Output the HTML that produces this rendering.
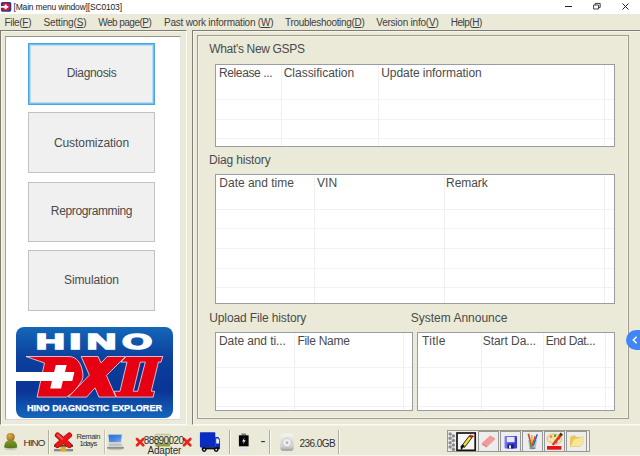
<!DOCTYPE html>
<html lang="en">
<head>
<meta charset="utf-8">
<title>[Main menu window][SC0103]</title>
<style>
*{margin:0;padding:0;box-sizing:border-box;}
html,body{width:640px;height:456px;overflow:hidden;background:#ebead9;}
body{position:relative;font-family:"Liberation Sans","IPAGothic",sans-serif;color:#2a2a2a;}
.abs{position:absolute;}
/* title bar */
#title{left:0;top:0;width:640px;height:14px;background:#fff;}
#title .t{left:14px;top:2px;font-size:8.5px;line-height:10px;color:#1a1a1a;white-space:nowrap;}
/* menu */
#menu{left:0;top:14px;width:640px;height:16px;background:#ebead9;}
#menu span{position:absolute;top:3px;font-size:10px;line-height:12px;white-space:nowrap;color:#404040;}
#menu u{text-decoration:underline;text-underline-offset:1px;}
/* panels */
.lbl{font-size:12px;line-height:14px;white-space:nowrap;color:#4a4a4a;}
.btn{left:28px;width:127px;height:61px;background:#f0f0f0;border:1px solid #c2c2c2;font-size:12px;text-align:center;color:#4a4a4a;}
.btn span{position:absolute;left:0;right:0;white-space:nowrap;line-height:14px;}
.list{background:#fff;border:1px solid #999ca1;overflow:hidden;}
.list .h{position:absolute;top:1px;font-size:12px;line-height:14px;white-space:nowrap;color:#4a4a4a;}
.list .v{position:absolute;top:0;bottom:0;width:1px;background:#f0f0f0;}
.list .r{position:absolute;left:0;right:0;height:1px;background:#f2f2f2;}
/* status */
.sep{width:2px;top:430px;height:24px;border-left:1px solid #b0ada1;border-right:1px solid #f8f7f0;}
.st{font-size:10px;line-height:11px;white-space:nowrap;color:#2e2e2e;}
/*FIT*/
#tt{letter-spacing:-0.177px;left:13.50px !important;}
#m1{letter-spacing:-0.318px;left:4.50px !important;}
#m2{letter-spacing:-0.165px;left:43.50px !important;}
#m3{letter-spacing:-0.527px;left:98.25px !important;}
#m4{letter-spacing:-0.232px;left:164.00px !important;}
#m5{letter-spacing:-0.324px;left:285.00px !important;}
#m6{letter-spacing:-0.222px;left:376.25px !important;}
#m7{letter-spacing:-0.497px;left:450.75px !important;}
#b1{letter-spacing:-0.332px;}
#b2{letter-spacing:-0.065px;}
#b3{letter-spacing:-0.366px;}
#b4{letter-spacing:-0.115px;}
#l1{letter-spacing:-0.338px;left:209.30px !important;}
#l2{letter-spacing:-0.142px;left:208.90px !important;}
#l3{letter-spacing:-0.132px;left:209.30px !important;}
#l4{letter-spacing:-0.006px;left:410.75px !important;}
#h1{letter-spacing:-0.388px;left:3.00px !important;}
#h2{letter-spacing:-0.016px;left:67.70px !important;}
#h3{letter-spacing:-0.052px;left:165.20px !important;}
#h4{letter-spacing:-0.014px;left:3.35px !important;}
#h5{letter-spacing:-0.008px;left:101.10px !important;}
#h6{letter-spacing:-0.083px;left:230.10px !important;}
#h7{letter-spacing:-0.096px;left:3.00px !important;}
#h8{letter-spacing:-0.273px;left:81.40px !important;}
#h9{letter-spacing:0.316px;left:4.00px !important;}
#h10{letter-spacing:-0.053px;left:64.70px !important;}
#h11{letter-spacing:-0.397px;left:127.70px !important;}
#s1{letter-spacing:-0.800px;left:23.40px !important;}
#s2{letter-spacing:-0.414px;left:76.40px !important;}
#s3{letter-spacing:-0.616px;left:79.40px !important;}
#s4{letter-spacing:-0.586px;left:143.70px !important;}
#s5{letter-spacing:-0.189px;left:147.50px !important;}
#s6{letter-spacing:-0.547px;left:299.50px !important;}
/*ENDFIT*/
</style>
</head>
<body>
<!-- TITLE BAR -->
<div id="title" class="abs">
  <svg class="abs" style="left:0;top:1px" width="13" height="12" viewBox="0 1 13 12">
    <rect x="0.900" y="1.900" width="10.400" height="9.800" rx="1.600" fill="#1b3b9c"/>
    <path d="M2.600 3.100H7.200C9.600 3.100 10.300 5 10.200 6.800C10.100 8.800 9.200 10.500 6.900 10.500H2.300Z" fill="#e01020"/>
    <path d="M0.900 6H4.600V4.500H6.700V6H8.300V7.700H6.700V9.200H4.600V7.700H0.900Z" fill="#fff"/>
  </svg>
  <div class="abs t" id="tt">[Main menu window][SC0103]</div>
  <svg class="abs" style="left:560px;top:0" width="80" height="14" viewBox="0 0 80 14">
    <path d="M5 6.5h7" stroke="#222" stroke-width="1" fill="none"/>
    <path d="M33.600 5h5v4h-5zM35.200 5v-1.600h5v4h-1.600" stroke="#2c2c2c" stroke-width="0.900" stroke-linejoin="round" fill="none"/>
    <path d="M62.5 3.5l6 6M68.5 3.5l-6 6" stroke="#222" stroke-width="1" fill="none"/>
  </svg>
</div>
<!-- MENU BAR -->
<div id="menu" class="abs">
  <span id="m1" style="left:5px">File(<u>F</u>)</span>
  <span id="m2" style="left:44px">Setting(<u>S</u>)</span>
  <span id="m3" style="left:99px">Web page(<u>P</u>)</span>
  <span id="m4" style="left:164px">Past work information (<u>W</u>)</span>
  <span id="m5" style="left:286px">Troubleshooting(<u>D</u>)</span>
  <span id="m6" style="left:376px">Version info(<u>V</u>)</span>
  <span id="m7" style="left:451px">Help(<u>H</u>)</span>
</div>

<!-- LEFT PANEL -->
<div class="abs" style="left:0;top:30px;width:187px;height:395px;border-left:1px solid #7f7d72;border-top:1px solid #7f7d72;border-right:1px solid #fbfaf3;border-bottom:1px solid #fbfaf3;box-shadow:inset 1px 1px 0 #f6f5ed;"></div>
<div class="abs" style="left:5px;top:36px;width:176px;height:384px;background:#fff;border:1px solid #d9d7d0;border-right-color:#e4e3e2;border-top-color:#98968b;border-left-color:#a9a79c;"></div>
<div class="abs btn" style="top:43px;height:62px;border:1px solid #52a3dd;box-shadow:inset 0 0 0 1px #72c0ef, inset 0 0 0 2px #b3e0f8;"><span id="b1" style="top:22px">Diagnosis</span></div>
<div class="abs btn" style="top:112px"><span id="b2" style="top:22.500px">Customization</span></div>
<div class="abs btn" style="top:182px;height:60px"><span id="b3" style="top:20.750px">Reprogramming</span></div>
<div class="abs btn" style="top:250px"><span id="b4" style="top:22.400px">Simulation</span></div>

<!-- LOGO -->
<svg class="abs" style="left:16px;top:327px" width="157" height="91" viewBox="16 327 157 91">
  <defs>
    <linearGradient id="lg" x1="0" y1="0" x2="0" y2="1">
      <stop offset="0" stop-color="#1467b8"/>
      <stop offset="0.35" stop-color="#0c3f9c"/>
      <stop offset="0.7" stop-color="#0a3596"/>
      <stop offset="1" stop-color="#1466bc"/>
    </linearGradient>
  </defs>
  <rect x="16" y="327" width="157" height="91" rx="8" fill="url(#lg)"/>
  <g font-family="Liberation Sans, sans-serif" font-weight="bold" font-size="21.200" fill="#fff" stroke="#fff" stroke-width="1.600" stroke-linejoin="miter">
    <text transform="translate(35.940,348.900) scale(1.878,1)">H</text>
    <text transform="translate(69.490,348.900) scale(1.957,1)">I</text>
    <text transform="translate(86.710,348.900) scale(1.927,1)">N</text>
    <text transform="translate(122.370,348.700) scale(1.806,1)">O</text>
  </g>
  <!-- D with wing -->
  <path d="M26 356.500H69.750C76.500 357 81.200 363 82.600 372C83.300 376 82.800 379 81.500 381.200C77.500 388 72.500 393.500 66.500 397.100H37.100L44.500 363Z" fill="#e60012" stroke="#fff" stroke-width="0.700"/>
  <!-- white bar + cross -->
  <path d="M15 372.100H54.100L55.800 364.900H66.700L65 372.100H74.400L72.300 381.100H62.850L61.100 388.400H50.200L51.900 381.100H15Z" fill="#fff"/>
  <!-- X -->
  <path d="M81.200 356.500H98.100L100.970 363L107.250 356.500H125.500L106.470 375.500L115.900 397.100H99L95 387.900L86.600 397.100H68.300L89.370 375.100Z" fill="#e60012" stroke="#fff" stroke-width="0.700"/>
  <!-- II -->
  <path d="M126.200 356.500H162.800L161 362.100H158.400L151.300 391.250H154.600L153.200 397.100H116.500L114 391.250H120L127 362.100H120.900Z" fill="#e60012" stroke="#fff" stroke-width="0.700"/>
  <path d="M140.300 362.100H145.300L137.700 391.250H133.300Z" fill="#0d2f8e" stroke="#fff" stroke-width="0.700"/>
  <text x="94.500" y="410.600" text-anchor="middle" font-family="Liberation Sans, sans-serif" font-weight="bold" font-size="8.600" fill="#fff" stroke="#fff" stroke-width="0.250" textLength="135.200" lengthAdjust="spacingAndGlyphs">HINO DIAGNOSTIC EXPLORER</text>
</svg>

<!-- RIGHT PANEL -->
<div class="abs" style="left:192px;top:30px;width:450px;height:395px;border-left:1px solid #7f7d72;border-top:1px solid #7f7d72;border-bottom:1px solid #fbfaf3;box-shadow:inset 1px 1px 0 #f6f5ed;"></div>
<div class="abs" style="left:197px;top:35px;width:432px;height:384px;border:1px solid #9f9d91;box-shadow:inset 0 0 0 1px #f3f2e8;"></div>
<div class="abs lbl" id="l1" style="left:209px;top:42px">What's New GSPS</div>
<div class="abs list" style="left:215px;top:64px;width:400px;height:83px">
  <span class="h" id="h1" style="left:4px">Release ...</span><span class="h" id="h2" style="left:68px">Classification</span><span class="h" id="h3" style="left:165px">Update information</span>
  <i class="v" style="left:65px"></i><i class="v" style="left:162px"></i><i class="v" style="left:388px"></i>
  <i class="r" style="top:34px"></i><i class="r" style="top:53.500px"></i><i class="r" style="top:73px"></i>
</div>
<div class="abs lbl" id="l2" style="left:209px;top:153px">Diag history</div>
<div class="abs list" style="left:215px;top:174px;width:400px;height:130px">
  <span class="h" id="h4" style="left:4px">Date and time</span><span class="h" id="h5" style="left:101px">VIN</span><span class="h" id="h6" style="left:231px">Remark</span>
  <i class="v" style="left:98px"></i><i class="v" style="left:228px"></i><i class="v" style="left:388px"></i>
  <i class="r" style="top:34px"></i><i class="r" style="top:53.300px"></i><i class="r" style="top:73.300px"></i><i class="r" style="top:92.600px"></i><i class="r" style="top:111.700px"></i>
</div>
<div class="abs lbl" id="l3" style="left:209px;top:311px">Upload File history</div>
<div class="abs list" style="left:215px;top:332px;width:198px;height:78.600px">
  <span class="h" id="h7" style="left:4px">Date and ti...</span><span class="h" id="h8" style="left:82px">File Name</span>
  <i class="v" style="left:78px"></i><i class="v" style="left:187px"></i>
  <i class="r" style="top:34.300px"></i><i class="r" style="top:53.700px"></i><i class="r" style="top:73.100px"></i>
</div>
<div class="abs lbl" id="l4" style="left:411px;top:311px">System Announce</div>
<div class="abs list" style="left:417px;top:332px;width:198px;height:78.600px">
  <span class="h" id="h9" style="left:5px">Title</span><span class="h" id="h10" style="left:66px">Start Da...</span><span class="h" id="h11" style="left:128px">End Dat...</span>
  <i class="v" style="left:63px"></i><i class="v" style="left:125px"></i><i class="v" style="left:187px"></i>
  <i class="r" style="top:34.300px"></i><i class="r" style="top:53.700px"></i><i class="r" style="top:73.100px"></i>
</div>
<!-- blue pill -->
<div class="abs" style="left:626px;top:330px;width:24px;height:20px;border-radius:10px;background:#4285f4;"></div>
<svg class="abs" style="left:631px;top:335px" width="8" height="10" viewBox="0 0 8 10"><path d="M5.600 1.800L2.300 5L5.600 8.200" stroke="#fff" stroke-width="1.500" fill="none"/></svg>

<!-- STATUS BAR -->
<div class="abs" style="left:0;top:425px;width:640px;height:1px;background:#f5f4ec"></div>
<div class="abs" style="left:0;top:455px;width:640px;height:1px;background:#f6f5ee"></div>
<!-- person + HINO -->
<svg class="abs" style="left:3px;top:431px" width="16" height="20" viewBox="3 431 16 20">
  <defs>
    <radialGradient id="hd" cx="0.4" cy="0.35" r="0.7"><stop offset="0" stop-color="#e0ad4e"/><stop offset="1" stop-color="#9a6a1a"/></radialGradient>
    <linearGradient id="bd" x1="0" y1="0" x2="0" y2="1"><stop offset="0" stop-color="#7f9f2a"/><stop offset="1" stop-color="#55741a"/></linearGradient>
  </defs>
  <ellipse cx="10.700" cy="449" rx="6.500" ry="1.300" fill="#cfccbc"/>
  <path d="M4.200 447.500C4.200 442.500 6.500 440 10.700 440C15 440 17.200 442.500 17.200 447.500C15 448.600 6.500 448.600 4.200 447.500Z" fill="url(#bd)"/>
  <circle cx="10.600" cy="437" r="4.100" fill="url(#hd)"/>
</svg>
<div class="abs st" id="s1" style="left:24px;top:436.500px;font-size:9.800px">HINO</div>
<div class="abs sep" style="left:48px"></div>
<!-- network + red X -->
<svg class="abs" style="left:52px;top:430px" width="24" height="24" viewBox="52 430 24 24">
  <ellipse cx="63.500" cy="440" rx="6" ry="6.500" fill="#d9dbe4"/>
  <rect x="54" y="444.600" width="19" height="2.400" fill="#4a4a4a"/>
  <rect x="54" y="449" width="19" height="2.400" fill="#8a8a8a"/>
  <rect x="60.600" y="446.600" width="5.400" height="4.600" fill="#e8a912"/>
  <path d="M57.600 435.200L69.300 445.400M69.300 435.200L57.400 445.400" stroke="#a90d0d" stroke-width="5.400" stroke-linecap="round" fill="none"/>
  <path d="M57.600 435.200L69.300 445.400M69.300 435.200L57.400 445.400" stroke="#e81616" stroke-width="4.200" stroke-linecap="round" fill="none"/>
  <path d="M57.400 434.800L62.500 439.200" stroke="#f46a5a" stroke-width="1.200" stroke-linecap="round" fill="none"/>
</svg>
<div class="abs st" id="s2" style="left:77px;top:431.500px;font-size:7.600px;line-height:9px">Remain</div>
<div class="abs st" id="s3" style="left:80px;top:439px;font-size:7.600px;line-height:9px">1days</div>
<div class="abs sep" style="left:104px;border-left-color:#c4c2b7"></div>
<!-- laptop -->
<svg class="abs" style="left:106px;top:432px" width="19" height="20" viewBox="106 432 19 20">
  <defs><linearGradient id="scr" x1="0" y1="0" x2="1" y2="1"><stop offset="0" stop-color="#2f6fd2"/><stop offset="0.550" stop-color="#4a88de"/><stop offset="1" stop-color="#7fb0ec"/></linearGradient></defs>
  <ellipse cx="115.500" cy="449" rx="7.500" ry="1.300" fill="#c9c7bb"/>
  <path d="M107.800 434H122.500L121.400 442.600H108.700Z" fill="#cfd4dc"/>
  <path d="M108.600 434.700H121.700L120.800 442.200H109.300Z" fill="url(#scr)"/>
  <path d="M108.700 442.500H121.400L124 447.600H107.100Z" fill="#d9d9d9"/>
  <path d="M109.600 443.400H120.600L122 446.200H108.800Z" fill="#c2c2c2"/>
  <path d="M107.100 447.400H124V448.400H107.100Z" fill="#5c5c5c"/>
</svg>
<!-- adapter -->
<svg class="abs" style="left:154px;top:433px" width="18" height="15" viewBox="154 433 18 15">
  <rect x="155" y="434.300" width="15.600" height="10" rx="1.200" fill="#dfe0bb" stroke="#b3b77e" stroke-width="0.800"/>
  <rect x="155.400" y="443.300" width="14.800" height="3.300" rx="0.800" fill="#92a13c"/>
</svg>
<svg class="abs" style="left:135px;top:437px" width="11" height="11" viewBox="0 0 11 11"><path d="M2 2L8.300 8.300M8.300 2L2 8.300" stroke="#e8261c" stroke-width="2.700" stroke-linecap="round" fill="none"/></svg>
<svg class="abs" style="left:181.500px;top:437px" width="11" height="11" viewBox="0 0 11 11"><path d="M2 2L8.300 8.300M8.300 2L2 8.300" stroke="#e8261c" stroke-width="2.700" stroke-linecap="round" fill="none"/></svg>
<div class="abs st" id="s4" style="left:144px;top:435px">88890020</div>
<div class="abs st" id="s5" style="left:148px;top:444.500px">Adapter</div>
<!-- truck -->
<svg class="abs" style="left:199px;top:431px" width="23" height="22" viewBox="199 431 23 22">
  <rect x="199.900" y="432.200" width="15.400" height="15.200" rx="0.800" fill="#0a2cc2"/>
  <path d="M215.200 436.900H218.300L220 439.600V449H215.200Z" fill="#0a2cc2"/>
  <path d="M216.200 438.400H218.100L219.100 440.200V443.400H216.200Z" fill="#f2f5fb"/>
  <rect x="201.800" y="447.300" width="17" height="2" fill="#0c0c10"/>
  <circle cx="204.200" cy="449.600" r="2.400" fill="#0c0c10"/><circle cx="204.200" cy="449.600" r="0.900" fill="#e8e8e8"/>
  <circle cx="216.200" cy="449.600" r="2.400" fill="#0c0c10"/><circle cx="216.200" cy="449.600" r="0.900" fill="#e8e8e8"/>
</svg>
<div class="abs sep" style="left:229px"></div>
<!-- battery -->
<svg class="abs" style="left:237px;top:432px" width="14" height="20" viewBox="237 432 14 20">
  <rect x="241.400" y="433.500" width="4.700" height="2" fill="#7c7c7c"/>
  <rect x="238.900" y="435.300" width="9.700" height="11" fill="#060606"/>
  <path d="M244.600 437.600L242.200 441.400H243.800L242.900 444.300L245.600 440.300H243.900Z" fill="#fff"/>
  <rect x="238.900" y="447.500" width="9.700" height="2.800" fill="#e1e3ea"/>
</svg>
<div class="abs st" style="left:260.500px;top:433px;font-size:15px;line-height:15px;color:#333">-</div>
<div class="abs sep" style="left:269px"></div>
<!-- hdd -->
<svg class="abs" style="left:279px;top:432px" width="16" height="20" viewBox="279 432 16 20">
  <defs><linearGradient id="hg" x1="0" y1="0" x2="0" y2="1"><stop offset="0" stop-color="#f4f4f4"/><stop offset="0.750" stop-color="#cfcfcf"/><stop offset="0.900" stop-color="#b4b4b4"/><stop offset="1" stop-color="#8f8f8f"/></linearGradient></defs>
  <rect x="280.300" y="433.700" width="13.400" height="17" rx="2.400" fill="url(#hg)"/>
  <circle cx="287" cy="442.600" r="4.500" fill="#ececec" stroke="#bdbdbd" stroke-width="0.700"/>
  <circle cx="287" cy="442.600" r="1.200" fill="#a8a8a8"/>
</svg>
<div class="abs st" id="s6" style="left:300px;top:437.500px">236.0GB</div>
<div class="abs sep" style="left:338px"></div>
<!-- toolbar -->
<div class="abs" style="left:447px;top:430px;width:143px;height:22px;border:1px solid #9c9a8f;background:#f1f0ea"></div>
<svg class="abs" style="left:448px;top:431px" width="8" height="20" viewBox="448 431 8 20">
  <rect x="448" y="431" width="8" height="20" fill="#efefef"/>
  <g fill="#8d8d8d"><circle cx="450.100" cy="434" r="1.750"/><circle cx="453.400" cy="436.100" r="1.750"/><circle cx="450.100" cy="438.300" r="1.750"/><circle cx="453.400" cy="440.400" r="1.750"/><circle cx="450.100" cy="442.700" r="1.750"/><circle cx="453.400" cy="444.900" r="1.750"/><circle cx="450.100" cy="447.100" r="1.750"/><circle cx="453.400" cy="449.300" r="1.750"/></g>
</svg>
<!-- b1 pen -->
<svg class="abs" style="left:456px;top:431px" width="21" height="21" viewBox="456 431 21 21">
  <rect x="457" y="433" width="18.200" height="17.300" fill="#f7f7f7" stroke="#161616" stroke-width="1.700"/>
  <path d="M469.300 435.800L472 437.600L464.600 447.400L462 445.600Z" fill="#f0e23c" stroke="#111" stroke-width="0.900"/>
  <path d="M462.400 444.200L464.800 446L461 450.200L460.600 446.600Z" fill="#111"/>
  <path d="M468.800 436.600L470.400 434.400L473.200 436.200L471.800 438.400Z" fill="#cf1c1c"/>
  <path d="M472.500 435.200L473.600 437" stroke="#111" stroke-width="0.800"/>
</svg>
<!-- b2 eraser -->
<svg class="abs" style="left:478px;top:431px" width="21" height="21" viewBox="0 0 21 21">
  <rect x="0.500" y="0.500" width="20" height="20" fill="#ededed" stroke="#969696"/>
  <path d="M4 12L12 4.500L17 7L9 15Z" fill="#f29a9a"/>
  <path d="M4 12L9 15L8.500 16.500L3.800 13.500Z" fill="#e07a7a"/>
  <path d="M9 15L17 7L16.700 8.600L8.500 16.500Z" fill="#ea8a8a"/>
</svg>
<!-- b3 floppy -->
<svg class="abs" style="left:500px;top:431px" width="21" height="21" viewBox="0 0 21 21">
  <defs><linearGradient id="fl" x1="0" y1="0" x2="1" y2="0"><stop offset="0" stop-color="#8a88f0"/><stop offset="0.350" stop-color="#4846dc"/><stop offset="1" stop-color="#3a38cc"/></linearGradient></defs>
  <rect x="0.500" y="0.500" width="20" height="20" fill="#ededed" stroke="#969696"/>
  <rect x="4.500" y="5" width="12.500" height="12.500" rx="0.800" fill="url(#fl)"/>
  <rect x="6.800" y="5.800" width="7.800" height="5.400" fill="#e4ebf8"/>
  <rect x="7.600" y="13.400" width="6.200" height="4.100" fill="#1c1c6c"/>
  <rect x="9" y="14.300" width="2" height="3.200" fill="#dfe6f4"/>
</svg>
<!-- b4 pencil cup -->
<svg class="abs" style="left:522px;top:431px" width="21" height="21" viewBox="0 0 21 21">
  <rect x="0.500" y="0.500" width="20" height="20" fill="#ededed" stroke="#969696"/>
  <path d="M6 9H15L13.500 17.500H7.500Z" fill="#9fc4d8" opacity="0.900"/>
  <path d="M5.500 3L7.200 2.600L10 14L8.600 14.500Z" fill="#d64a1c"/>
  <path d="M9 4L10.500 3.800L11 15H9.500Z" fill="#e6b422"/>
  <path d="M14.500 3L16 3.600L12 15L10.800 14.500Z" fill="#2f66c8"/>
  <path d="M12.500 5L13.800 5.300L10.300 16H9.200Z" fill="#d8341c"/>
  <path d="M7.500 12L9.500 11.500L10 16.500H8.300Z" fill="#4aa02c"/>
  <ellipse cx="10.500" cy="17.300" rx="3.200" ry="1" fill="#6a8ea6"/>
</svg>
<!-- b5 palette -->
<svg class="abs" style="left:544px;top:431px" width="21" height="21" viewBox="0 0 21 21">
  <rect x="0.500" y="0.500" width="20" height="20" fill="#ededed" stroke="#969696"/>
  <path d="M3 8C3 4.500 7 2.500 11 3C15.500 3.500 18.500 6 17.500 9.500C16.800 12.500 13 14 9.500 13.800C8 13.700 8.500 11.500 6.800 11.300C4.800 11.100 3 10.500 3 8Z" fill="#f4e2a6" stroke="#c9a64a" stroke-width="0.600"/>
  <circle cx="7" cy="5.600" r="1.200" fill="#e8801c"/><circle cx="11" cy="4.800" r="1.200" fill="#3aa62c"/><circle cx="15" cy="7.500" r="1.100" fill="#2c8ad6"/><circle cx="12.500" cy="11.500" r="1.100" fill="#c63ac6"/>
  <path d="M16.500 1.500L19 3.500L17 6L14.800 4.300Z" fill="#5a3212"/>
  <path d="M14.800 4.300L17 6L9.500 14.500L7.800 13.200Z" fill="#e2341c"/>
  <rect x="3" y="15" width="14.300" height="3.700" fill="#ee1111"/>
</svg>
<!-- b6 folder -->
<svg class="abs" style="left:566px;top:431px" width="21" height="21" viewBox="0 0 21 21">
  <rect x="0.500" y="0.500" width="20" height="20" fill="#ededed" stroke="#969696"/>
  <path d="M4 6.500L6 4.500H9L10.500 6H14.500V15.500H4Z" fill="#e6c95a"/>
  <path d="M4.500 15.500L7.500 8.500L17 5.500V12.500L14 15.500Z" fill="#f7e79a" stroke="#e0c860" stroke-width="0.500"/>
</svg>

</body>
</html>
